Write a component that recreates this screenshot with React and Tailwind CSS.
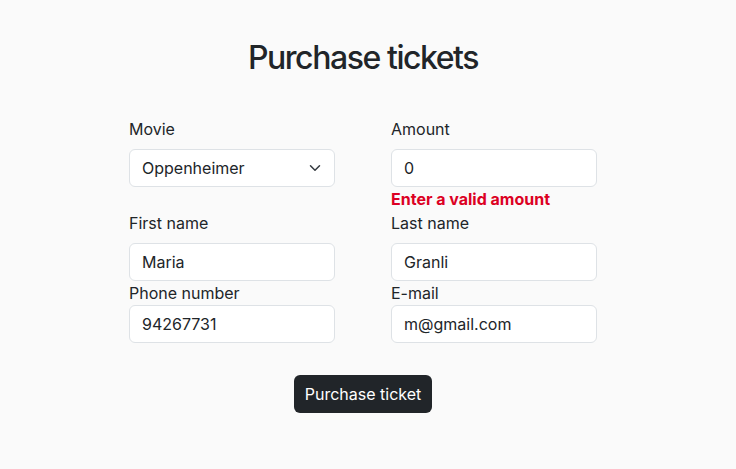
function Field({ label, value, tight, children }) {
  return (
    <div className="flex flex-col">
      <label className={`text-base leading-6 text-[#212529] ${tight ? '' : 'mb-2'}`}>{label}</label>
      {children || (
        <input
          type="text"
          defaultValue={value}
          className="h-[38px] w-full rounded-md border border-[#dee2e6] bg-white px-3 text-base text-[#212529] outline-none"
        />
      )}
    </div>
  )
}

function MovieSelect() {
  return (
    <div className="relative">
      <select
        defaultValue="Oppenheimer"
        className="h-[38px] w-full appearance-none rounded-md border border-[#dee2e6] bg-white px-3 text-base text-[#212529] outline-none"
      >
        <option>Oppenheimer</option>
        <option>Barbie</option>
      </select>
      <svg
        className="pointer-events-none absolute right-3 top-1/2 h-3 w-4 -translate-y-1/2"
        viewBox="0 0 16 16"
        fill="none"
        stroke="#343a40"
        strokeWidth="2"
        strokeLinecap="round"
        strokeLinejoin="round"
      >
        <path d="m2 5 6 6 6-6" />
      </svg>
    </div>
  )
}

export default function App() {
  return (
    <div
      className="min-h-[469px] w-full bg-[#fafafa]"
      style={{ fontFamily: 'Inter, "Noto Sans", sans-serif' }}
    >
      <div className="flex w-[726px] flex-col items-center pt-[39px]">
        <h1 className="text-[32px] font-medium leading-[1.2] tracking-[-0.045em] text-[#212529]">
          Purchase tickets
        </h1>

        <form className="mt-10 w-[468px]" onSubmit={(e) => e.preventDefault()}>
          <div className="grid grid-cols-2 gap-x-14">
            <div className="flex flex-col">
              <label className="mb-2 text-base leading-6 text-[#212529]">Movie</label>
              <MovieSelect />
            </div>
            <div className="flex flex-col">
              <label className="mb-2 text-base leading-6 text-[#212529]">Amount</label>
              <input
                type="text"
                defaultValue="0"
                className="h-[38px] w-full rounded-md border border-[#dee2e6] bg-white px-3 text-base text-[#212529] outline-none"
              />
              <p className="text-base font-bold leading-6 text-[#dc0023]">Enter a valid amount</p>
            </div>

            <Field label="First name" value="Maria" />
            <Field label="Last name" value="Granli" />

            <Field label="Phone number" value="94267731" tight />
            <Field label="E-mail" value="m@gmail.com" tight />
          </div>

          <div className="mt-8 flex justify-center">
            <button
              type="submit"
              className="h-[38px] rounded-md bg-[#212529] px-[11px] text-base text-white"
            >
              Purchase ticket
            </button>
          </div>
        </form>
      </div>
    </div>
  )
}
